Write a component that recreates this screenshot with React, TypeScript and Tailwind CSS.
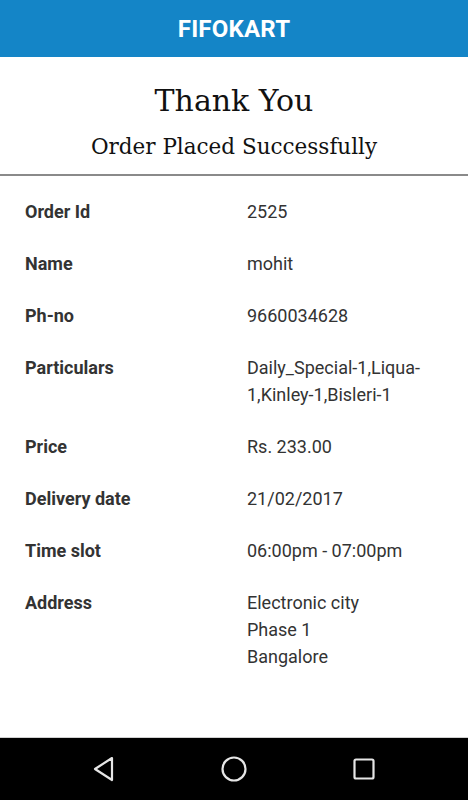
const rows: { label: string; value: string[] }[] = [
  { label: "Order Id", value: ["2525"] },
  { label: "Name", value: ["mohit"] },
  { label: "Ph-no", value: ["9660034628"] },
  { label: "Particulars", value: ["Daily_Special-1,Liqua-", "1,Kinley-1,Bisleri-1"] },
  { label: "Price", value: ["Rs. 233.00"] },
  { label: "Delivery date", value: ["21/02/2017"] },
  { label: "Time slot", value: ["06:00pm - 07:00pm"] },
  { label: "Address", value: ["Electronic city", "Phase 1", "Bangalore"] },
];

export default function App() {
  return (
    <div className="flex h-screen w-full flex-col bg-white font-['Roboto',sans-serif]">
      {/* Toolbar */}
      <header className="flex h-[57px] items-center justify-center bg-[#1485c7]">
        <h1 className="text-[24px] font-bold tracking-[0.2px] text-white">FIFOKART</h1>
      </header>

      {/* Heading */}
      <div className="flex flex-col items-center border-b-2 border-[#8a8a8a] pb-[11px] pt-[22px] font-['DejaVu_Serif',serif] text-[#111]">
        <div className="text-[30px] leading-[44px]">Thank You</div>
        <div className="mt-[8px] text-[21.5px] leading-[32px]">Order Placed Successfully</div>
      </div>

      {/* Order details */}
      <div className="flex flex-1 flex-col gap-[25px] px-[25px] pt-[22px] text-[#333]">
        {rows.map((r) => (
          <div key={r.label} className="flex leading-[27px]">
            <div className="w-[222px] text-[18px] font-bold">{r.label}</div>
            <div className="flex flex-col text-[18px]">
              {r.value.map((v) => (
                <span key={v}>{v}</span>
              ))}
            </div>
          </div>
        ))}
      </div>

      {/* Nav bar */}
      <nav className="grid h-[63px] grid-cols-[130px_130px_130px] items-center justify-center justify-items-center border-t border-[#d0d0d0] bg-black">
        <svg width="24" height="26" viewBox="0 0 24 26" fill="none" stroke="#e6e6e6" strokeWidth="2.2" strokeLinejoin="round">
          <path d="M20 2 L3 13 L20 24 Z" />
        </svg>
        <svg width="26" height="26" viewBox="0 0 26 26" fill="none" stroke="#e6e6e6" strokeWidth="2.2">
          <circle cx="13" cy="13" r="11.5" />
        </svg>
        <svg width="22" height="22" viewBox="0 0 22 22" fill="none" stroke="#e6e6e6" strokeWidth="2.2">
          <rect x="1.5" y="1.5" width="19" height="19" rx="1.5" />
        </svg>
      </nav>
    </div>
  );
}
